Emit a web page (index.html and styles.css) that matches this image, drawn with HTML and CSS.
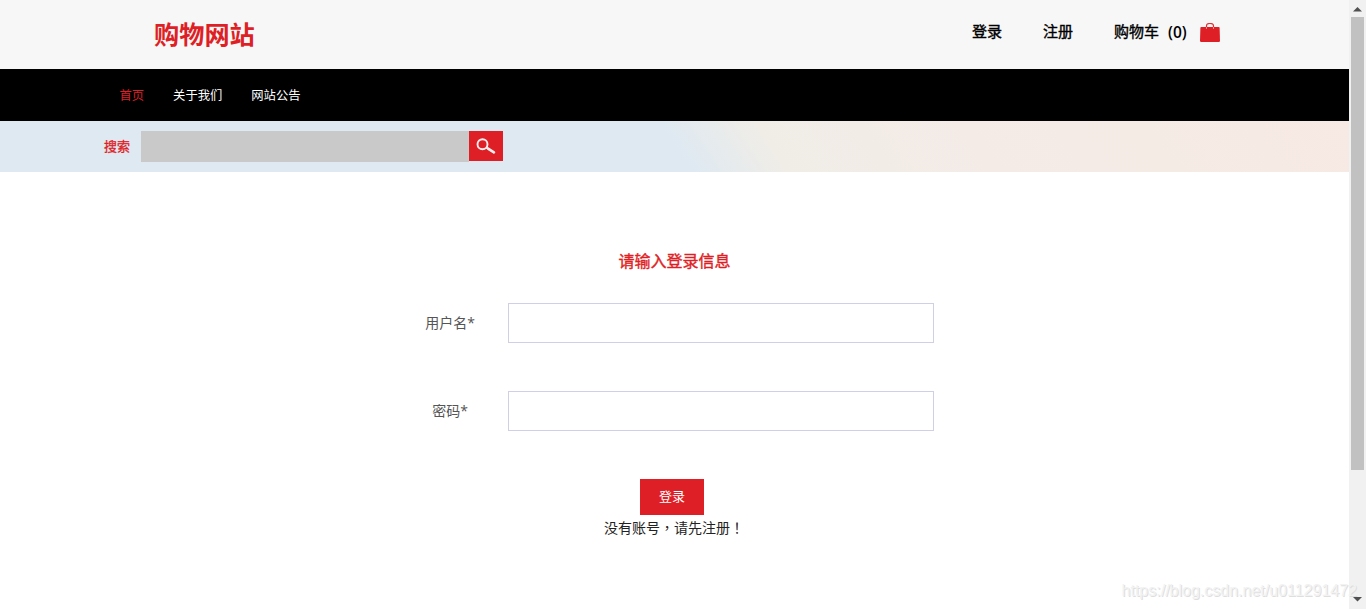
FILE: index.html
```html
<!DOCTYPE html>
<html lang="zh-CN">
<head>
  <meta charset="UTF-8" />
  <meta name="viewport" content="width=device-width, initial-scale=1.0"/>
  <title>购物网站</title>
  <link rel="stylesheet" href="styles.css">
</head>
<body>
  <div class="page">
    <header class="header">
      <h1 class="logo">购物网站</h1>
      <div class="header-links">
        <a href="#">登录</a>
        <a href="#">注册</a>
        <a href="#" class="cart">
          <span class="cart-name">购物车</span>
          <span class="cart-count">(0)</span>
          <svg class="cart-icon" width="20" height="20" viewBox="0 0 20 20">
            <path d="M6.500 5V3C6.500 1.300 7.600.5 10 .5s3.500.8 3.500 2.500V5" fill="none" stroke="#df2f35" stroke-width="1.200"/>
            <path d="M1.300 4h17.400q.8 0 .9.800L20 17.800Q20 19 18.800 19H1.200Q0 19 0 17.800L.4 4.800Q.5 4 1.300 4z" fill="#df1f26"/>
            <path d="M6.500 4v2M13.500 4v2" stroke="#ee8589" stroke-width="1"/>
          </svg>
        </a>
      </div>
    </header>

    <nav class="nav">
      <a href="#" class="active">首页</a>
      <a href="#">关于我们</a>
      <a href="#">网站公告</a>
    </nav>

    <form class="search">
      <label for="keyword">搜索</label>
      <input type="text" id="keyword" />
      <button type="button" class="search-btn">
        <svg width="20" height="16" viewBox="0 0 20 16">
          <circle cx="6.500" cy="6.200" r="5" fill="none" stroke="#f7eeee" stroke-width="1.900"/>
          <path d="M10.200 9.300l3 2" stroke="#f7eeee" stroke-width="2"/>
          <path d="M12.500 10.800l5.400 3.500" stroke="#f7eeee" stroke-width="2.600" stroke-linecap="round"/>
        </svg>
      </button>
    </form>

    <main class="login">
      <h2>请输入登录信息</h2>
      <form class="login-form">
        <div class="row">
          <label for="username">用户名*</label>
          <input type="text" id="username" />
        </div>
        <div class="row">
          <label for="password">密码*</label>
          <input type="password" id="password" />
        </div>
        <button type="button" class="login-btn">登录</button>
        <a href="#" class="register">没有账号<span class="mark" lang="zh-TW">，</span>请先注册<span class="mark" lang="zh-TW">！</span></a>
      </form>
    </main>
  </div>

  <div class="scrollbar">
    <svg width="9" height="5" viewBox="0 0 9 5"><path d="M4.500 0L9 4.500H0z" fill="#505050"/></svg>
    <div class="thumb"></div>
    <svg class="down" width="9" height="5" viewBox="0 0 9 5"><path d="M0 0h9L4.500 4.500z" fill="#505050"/></svg>
  </div>

  <div class="watermark">https://blog.csdn.net/u011291472</div>
</body>
</html>
```
FILE: styles.css
```css
* {
  box-sizing: border-box;
  margin: 0;
  padding: 0;
}

body {
  display: flex;
  height: 100vh;
  overflow: hidden;
  background-color: #fff;
  font-family: "Open Sans", "Noto Sans CJK SC", sans-serif;
  position: relative;
}

a {
  color: inherit;
  text-decoration: none;
}

svg {
  display: block;
}

button {
  border: none;
  font-family: inherit;
  cursor: pointer;
}

.page {
  flex: 1;
}

/* header */
.header {
  display: flex;
  justify-content: space-between;
  height: 69px;
  padding: 0 129px 0 154px;
  background-color: #f7f7f7;
}

.logo {
  font-size: 25.2px;
  line-height: 69px;
  font-weight: bold;
  color: #df1f26;
}

.header-links {
  display: flex;
  gap: 41px;
  font-size: 15px;
  line-height: 20px;
  padding-top: 21px;
  font-weight: 400;
  -webkit-text-stroke: 0.4px;
  color: #000;
}

.cart {
  display: flex;
  height: 20px;
}

.cart-count {
  width: 32px;
  margin-left: 9px;
  padding-top: 1px;
  font-size: 15.5px;
  font-weight: 600;
  -webkit-text-stroke: 0;
}

.cart-icon {
  margin-top: 2px;
}

/* navigation */
.nav {
  display: flex;
  gap: 29px;
  height: 52px;
  padding: 1px 0 0 119.5px;
  background-color: #000;
  color: #fff;
  font-size: 12.3px;
  line-height: 52px;
}

.nav .active {
  color: #df1f26;
}

/* search bar */
.search {
  display: flex;
  height: 51px;
  padding: 10px 0 0 104px;
  background: linear-gradient(56deg, #dee9f2 50%, #f0ede7 57%, #f4ebe7 72%, #f5ebe5 85%, #f7e9e4);
}

.search label {
  width: 37px;
  font-size: 13px;
  line-height: 30px;
  -webkit-text-stroke: 0.3px;
  color: #df1f26;
}

.search input {
  width: 328px;
  height: 31px;
  border: none;
  background-color: #c9c9c9;
}

.search-btn {
  width: 34px;
  height: 30px;
  padding: 0 0 0 7px;
  background-color: #df1f26;
}

/* login form */
.login {
  padding-top: 77px;
}

.login h2 {
  font-size: 16px;
  line-height: 24px;
  font-weight: 400;
  -webkit-text-stroke: 0.4px;
  color: #df1f26;
  text-align: center;
}

.login-form {
  display: flex;
  flex-direction: column;
  align-items: center;
  margin-top: 30px;
}

.row {
  display: flex;
  width: 518px;
  height: 40px;
  margin-bottom: 48px;
}

.row label {
  width: 69px;
  margin-right: 23px;
  text-align: center;
  font-size: 14px;
  line-height: 39px;
  color: #555;
}

.row input {
  width: 426px;
  height: 40px;
  padding: 0 10px;
  border: 1px solid #cfd0e5;
  outline: none;
}

.login-btn {
  width: 64px;
  height: 36px;
  margin-right: 5px;
  padding-bottom: 3px;
  background-color: #df1f26;
  color: #fff;
  font-size: 13px;
}

.register {
  margin-right: 1px;
  font-size: 14px;
  line-height: 24px;
  color: #222;
}

/* centred punctuation */
.mark {
  font-family: "Noto Sans CJK TC", sans-serif;
}

/* scrollbar */
.scrollbar {
  display: flex;
  flex-direction: column;
  align-items: center;
  width: 17px;
  padding: 7px 0;
  background-color: #f1f1f1;
}

.thumb {
  width: 13px;
  height: 453px;
  margin-top: 5px;
  background-color: #c1c1c1;
}

.scrollbar .down {
  margin-top: auto;
}

.watermark {
  position: absolute;
  right: 9px;
  bottom: 8px;
  font-family: "Liberation Sans", sans-serif;
  font-size: 16px;
  line-height: 20px;
  color: #f2f2f2;
  text-shadow: 1px 1px 0 #dedede;
}
```
